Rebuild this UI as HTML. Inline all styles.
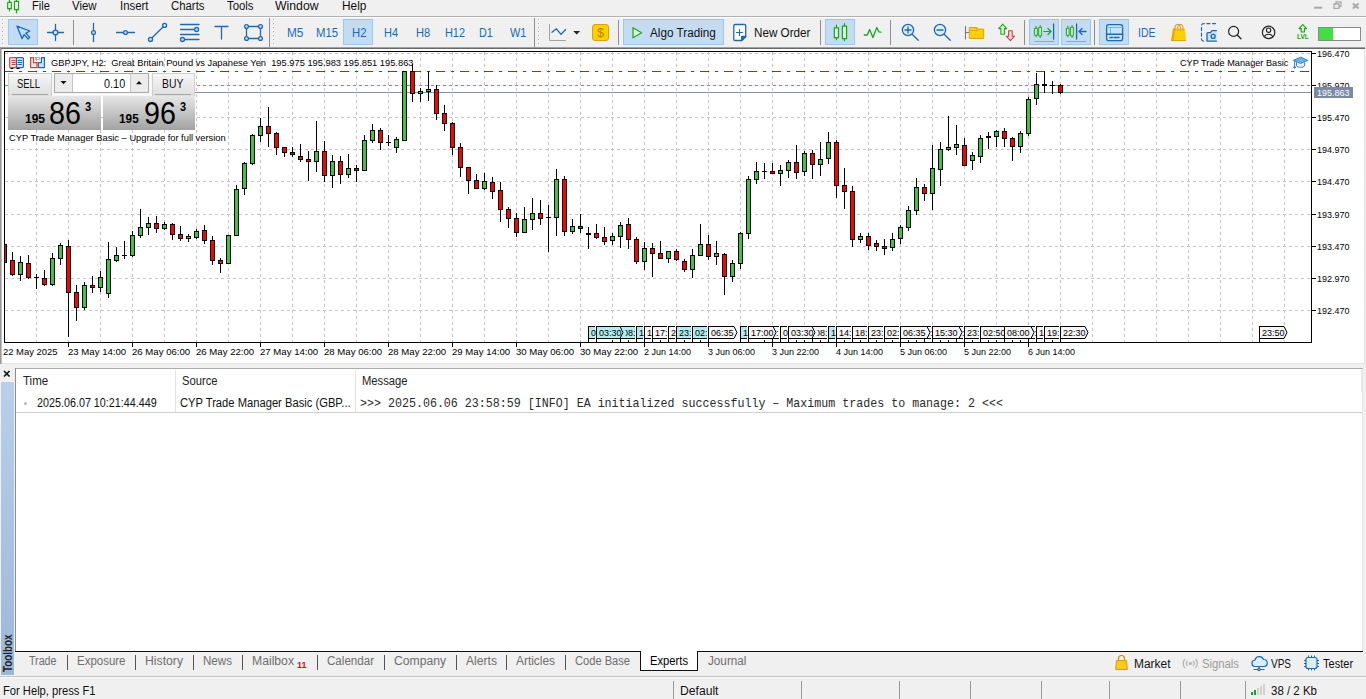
<!DOCTYPE html>
<html><head><meta charset="utf-8"><title>GBPJPY,H2</title>
<style>
html,body{margin:0;padding:0;}
body{width:1366px;height:699px;overflow:hidden;background:#f0f0f0;position:relative;font-family:"Liberation Sans",sans-serif;}
.t{position:absolute;white-space:pre;}
.b{position:absolute;}
svg{position:absolute;left:0;top:0;overflow:visible;}
</style></head><body>

<div class="b" style="left:0px;top:16px;width:1366px;height:1px;background:#b2b2b2;"></div>
<div class="b" style="left:0px;top:17px;width:1366px;height:1px;background:#ffffff;"></div>
<span id="m0" class="t" style="left:32.40px;top:-2.16px;font:normal 12px/16px 'Liberation Sans', sans-serif;color:#111;transform:scaleX(0.9202);transform-origin:0 0;">File</span>
<span id="m1" class="t" style="left:72.10px;top:-2.16px;font:normal 12px/16px 'Liberation Sans', sans-serif;color:#111;transform:scaleX(0.9536);transform-origin:0 0;">View</span>
<span id="m2" class="t" style="left:119.50px;top:-2.16px;font:normal 12px/16px 'Liberation Sans', sans-serif;color:#111;transform:scaleX(0.9495);transform-origin:0 0;">Insert</span>
<span id="m3" class="t" style="left:170.50px;top:-2.16px;font:normal 12px/16px 'Liberation Sans', sans-serif;color:#111;transform:scaleX(0.9478);transform-origin:0 0;">Charts</span>
<span id="m4" class="t" style="left:226.50px;top:-2.16px;font:normal 12px/16px 'Liberation Sans', sans-serif;color:#111;transform:scaleX(0.9459);transform-origin:0 0;">Tools</span>
<span id="m5" class="t" style="left:275.40px;top:-2.16px;font:normal 12px/16px 'Liberation Sans', sans-serif;color:#111;transform:scaleX(1.0214);transform-origin:0 0;">Window</span>
<span id="m6" class="t" style="left:341.60px;top:-2.16px;font:normal 12px/16px 'Liberation Sans', sans-serif;color:#111;transform:scaleX(0.9884);transform-origin:0 0;">Help</span>
<div class="b" style="left:2px;top:19px;width:1px;height:1px;background:#b0b0b0;"></div>
<div class="b" style="left:3px;top:20px;width:1px;height:1px;background:#fff;"></div>
<div class="b" style="left:2px;top:23px;width:1px;height:1px;background:#b0b0b0;"></div>
<div class="b" style="left:3px;top:24px;width:1px;height:1px;background:#fff;"></div>
<div class="b" style="left:2px;top:27px;width:1px;height:1px;background:#b0b0b0;"></div>
<div class="b" style="left:3px;top:28px;width:1px;height:1px;background:#fff;"></div>
<div class="b" style="left:2px;top:31px;width:1px;height:1px;background:#b0b0b0;"></div>
<div class="b" style="left:3px;top:32px;width:1px;height:1px;background:#fff;"></div>
<div class="b" style="left:2px;top:35px;width:1px;height:1px;background:#b0b0b0;"></div>
<div class="b" style="left:3px;top:36px;width:1px;height:1px;background:#fff;"></div>
<div class="b" style="left:2px;top:39px;width:1px;height:1px;background:#b0b0b0;"></div>
<div class="b" style="left:3px;top:40px;width:1px;height:1px;background:#fff;"></div>
<div class="b" style="left:2px;top:43px;width:1px;height:1px;background:#b0b0b0;"></div>
<div class="b" style="left:3px;top:44px;width:1px;height:1px;background:#fff;"></div>
<div class="b" style="left:273px;top:19px;width:1px;height:1px;background:#b0b0b0;"></div>
<div class="b" style="left:274px;top:20px;width:1px;height:1px;background:#fff;"></div>
<div class="b" style="left:273px;top:23px;width:1px;height:1px;background:#b0b0b0;"></div>
<div class="b" style="left:274px;top:24px;width:1px;height:1px;background:#fff;"></div>
<div class="b" style="left:273px;top:27px;width:1px;height:1px;background:#b0b0b0;"></div>
<div class="b" style="left:274px;top:28px;width:1px;height:1px;background:#fff;"></div>
<div class="b" style="left:273px;top:31px;width:1px;height:1px;background:#b0b0b0;"></div>
<div class="b" style="left:274px;top:32px;width:1px;height:1px;background:#fff;"></div>
<div class="b" style="left:273px;top:35px;width:1px;height:1px;background:#b0b0b0;"></div>
<div class="b" style="left:274px;top:36px;width:1px;height:1px;background:#fff;"></div>
<div class="b" style="left:273px;top:39px;width:1px;height:1px;background:#b0b0b0;"></div>
<div class="b" style="left:274px;top:40px;width:1px;height:1px;background:#fff;"></div>
<div class="b" style="left:273px;top:43px;width:1px;height:1px;background:#b0b0b0;"></div>
<div class="b" style="left:274px;top:44px;width:1px;height:1px;background:#fff;"></div>
<div class="b" style="left:538px;top:19px;width:1px;height:1px;background:#b0b0b0;"></div>
<div class="b" style="left:539px;top:20px;width:1px;height:1px;background:#fff;"></div>
<div class="b" style="left:538px;top:23px;width:1px;height:1px;background:#b0b0b0;"></div>
<div class="b" style="left:539px;top:24px;width:1px;height:1px;background:#fff;"></div>
<div class="b" style="left:538px;top:27px;width:1px;height:1px;background:#b0b0b0;"></div>
<div class="b" style="left:539px;top:28px;width:1px;height:1px;background:#fff;"></div>
<div class="b" style="left:538px;top:31px;width:1px;height:1px;background:#b0b0b0;"></div>
<div class="b" style="left:539px;top:32px;width:1px;height:1px;background:#fff;"></div>
<div class="b" style="left:538px;top:35px;width:1px;height:1px;background:#b0b0b0;"></div>
<div class="b" style="left:539px;top:36px;width:1px;height:1px;background:#fff;"></div>
<div class="b" style="left:538px;top:39px;width:1px;height:1px;background:#b0b0b0;"></div>
<div class="b" style="left:539px;top:40px;width:1px;height:1px;background:#fff;"></div>
<div class="b" style="left:538px;top:43px;width:1px;height:1px;background:#b0b0b0;"></div>
<div class="b" style="left:539px;top:44px;width:1px;height:1px;background:#fff;"></div>
<div class="b" style="left:8px;top:19px;width:28px;height:24px;background:#c3dcf2;border:1px solid #98caf3;"></div>
<div class="b" style="left:73px;top:20px;width:1px;height:25px;background:#8e8e8e;"></div>
<div class="b" style="left:269px;top:18px;width:1px;height:29px;background:#8e8e8e;"></div>
<div class="b" style="left:534px;top:18px;width:1px;height:29px;background:#8e8e8e;"></div>
<div class="b" style="left:343px;top:19px;width:28px;height:24px;background:#c3dcf2;border:1px solid #98caf3;"></div>
<span id="tf0" class="t" style="left:286.60px;top:24.67px;font:normal 12.5px/16px 'Liberation Sans', sans-serif;color:#1b6ab3;transform:scaleX(0.9439);transform-origin:0 0;">M5</span>
<span id="tf1" class="t" style="left:315.70px;top:24.67px;font:normal 12.5px/16px 'Liberation Sans', sans-serif;color:#1b6ab3;transform:scaleX(0.9125);transform-origin:0 0;">M15</span>
<span id="tf2" class="t" style="left:351.60px;top:24.67px;font:normal 12.5px/16px 'Liberation Sans', sans-serif;color:#1b6ab3;transform:scaleX(0.9009);transform-origin:0 0;">H2</span>
<span id="tf3" class="t" style="left:383.60px;top:24.67px;font:normal 12.5px/16px 'Liberation Sans', sans-serif;color:#1b6ab3;transform:scaleX(0.8821);transform-origin:0 0;">H4</span>
<span id="tf4" class="t" style="left:415.80px;top:24.67px;font:normal 12.5px/16px 'Liberation Sans', sans-serif;color:#1b6ab3;transform:scaleX(0.8884);transform-origin:0 0;">H8</span>
<span id="tf5" class="t" style="left:444.50px;top:24.67px;font:normal 12.5px/16px 'Liberation Sans', sans-serif;color:#1b6ab3;transform:scaleX(0.8719);transform-origin:0 0;">H12</span>
<span id="tf6" class="t" style="left:479.30px;top:24.67px;font:normal 12.5px/16px 'Liberation Sans', sans-serif;color:#1b6ab3;transform:scaleX(0.8571);transform-origin:0 0;">D1</span>
<span id="tf7" class="t" style="left:509.60px;top:24.67px;font:normal 12.5px/16px 'Liberation Sans', sans-serif;color:#1b6ab3;transform:scaleX(0.8747);transform-origin:0 0;">W1</span>
<div class="b" style="left:618px;top:20px;width:1px;height:25px;background:#8e8e8e;"></div>
<div class="b" style="left:623px;top:19px;width:99px;height:24px;background:#c3dcf2;border:1px solid #98caf3;"></div>
<span id="algo" class="t" style="left:650.40px;top:24.67px;font:normal 12.5px/16px 'Liberation Sans', sans-serif;color:#111;transform:scaleX(0.9389);transform-origin:0 0;">Algo Trading</span>
<span id="nord" class="t" style="left:753.60px;top:24.67px;font:normal 12.5px/16px 'Liberation Sans', sans-serif;color:#111;transform:scaleX(0.9332);transform-origin:0 0;">New Order</span>
<div class="b" style="left:820px;top:20px;width:1px;height:25px;background:#8e8e8e;"></div>
<div class="b" style="left:825px;top:19px;width:28px;height:24px;background:#c3dcf2;border:1px solid #98caf3;"></div>
<div class="b" style="left:890px;top:20px;width:1px;height:25px;background:#8e8e8e;"></div>
<div class="b" style="left:1024px;top:20px;width:1px;height:25px;background:#8e8e8e;"></div>
<div class="b" style="left:1029px;top:19px;width:28px;height:24px;background:#c3dcf2;border:1px solid #98caf3;"></div>
<div class="b" style="left:1061px;top:19px;width:28px;height:24px;background:#c3dcf2;border:1px solid #98caf3;"></div>
<div class="b" style="left:1094px;top:20px;width:1px;height:25px;background:#8e8e8e;"></div>
<div class="b" style="left:1099px;top:19px;width:28px;height:24px;background:#c3dcf2;border:1px solid #98caf3;"></div>
<span id="ide" class="t" style="left:1137.60px;top:24.67px;font:normal 12.5px/16px 'Liberation Sans', sans-serif;color:#1b6ab3;transform:scaleX(0.8348);transform-origin:0 0;">IDE</span>
<div class="b" style="left:1318px;top:27px;width:41px;height:12px;background:#fff;border:1px solid #8a8a8a;"></div>
<div class="b" style="left:1319px;top:28px;width:14px;height:12px;background:#40e040;"></div>
<svg width="1366" height="50"><g stroke="#a8a8a8" fill="none" stroke-width="2"><path d="M1314 7.700h8.200"/><path d="M1334 4h5v4.300h-5z M1336 3.500v-1.700h5v4.500h-1.800" stroke-width="1.300"/><path d="M1352.800 3.600l5.800 5M1358.600 3.600l-5.800 5"/></g></svg>
<svg id="tbicons" width="1366" height="50">
<g fill="none" stroke="#1b6ab3" stroke-width="1.3" stroke-linecap="round" stroke-linejoin="round">
<g stroke="#1aa51a" stroke-width="1.2" fill="#f0fff0"><path d="M9.5 0v10.800M16.500 0v12.800" /><rect x="7.700" y="2.400" width="3.600" height="6.300"/><rect x="14.500" y="1.300" width="4" height="8.400"/></g>
<path d="M17 26.2 L29.8 31 L25.8 33.4 L29.8 37.4 L28.1 39 L24.1 34.6 L22 38.6 Z" fill="#b9e1ff"/>
<path d="M47.5 32.5h16M55.5 24.5v16"/><circle cx="55.5" cy="32.5" r="2.4" fill="#c6e6ff"/>
<path d="M93.5 23.5v18"/><circle cx="93.5" cy="32.5" r="1.9" fill="#c6e6ff"/>
<path d="M116.5 32.5h18"/><circle cx="125.5" cy="32.5" r="1.9" fill="#c6e6ff"/>
<path d="M151.8 38 L163.3 26.8"/><circle cx="150.5" cy="39.4" r="2" fill="#c6e6ff"/><circle cx="164.6" cy="25.4" r="2" fill="#c6e6ff"/>
<path d="M180.5 24.5h18.5M180.5 34.5h18.5M180.5 29.5h14M184.5 39.5h14.5"/><circle cx="196.6" cy="29.5" r="2" fill="#c6e6ff"/><circle cx="182.5" cy="39.5" r="2" fill="#c6e6ff"/>
<path d="M215 26.5h13M221.5 26.5v12.5"/>
<rect x="246.5" y="26.5" width="14" height="12"/><circle cx="246.5" cy="26.5" r="1.9" fill="#c6e6ff"/><circle cx="260.5" cy="26.5" r="1.9" fill="#c6e6ff"/><circle cx="246.5" cy="38.5" r="1.9" fill="#c6e6ff"/><circle cx="260.5" cy="38.5" r="1.9" fill="#c6e6ff"/>
<path d="M549.5 24.5v16h16" stroke="#999" stroke-width="0.9"/><path d="M552 32.300L556.400 28.800L561 34.400L565.600 29.500"/>
<path d="M573.3 31h6.8l-3.4 3.6z" fill="#222" stroke="none"/>
<rect x="592.5" y="24.5" width="16" height="16" rx="2.5" fill="#ffd000" stroke="#e0a000" stroke-width="1"/>
<path d="M633 27.8v10l8.6-5z" stroke="#22a722" fill="#dff7df"/>
<path d="M735 24.5h9.5a1.2 1.2 0 0 1 1.2 1.2v10.8l-4 4h-6.7a1.2 1.2 0 0 1 -1.2-1.2v-13.6a1.2 1.2 0 0 1 1.2-1.2z" fill="#fff"/><path d="M741.7 40.5v-4h4z" fill="#1b6ab3"/><path d="M736.5 32.5h6M739.5 29.5v6" stroke-width="1.1"/>
<g stroke="#1aa51a" stroke-width="1.2" fill="#d8f8d8"><path d="M836.400 25.200v14.500M844.500 23.500v17.200"/><rect x="834.300" y="27.900" width="4.200" height="9.800"/><rect x="842.400" y="26.200" width="4.200" height="12.500"/></g>
<path d="M864.300 35H867.300L869.600 29.600L872.900 37.500L876.800 27.500L878.800 31.800L881 32.200" stroke="#1aa51a" stroke-width="1.3"/>
<circle cx="908" cy="30" r="5.600" fill="#d9edfd"/><path d="M912.200 34.200l6 6M905 30h6M908 27v6"/>
<circle cx="940" cy="30" r="5.600" fill="#d9edfd"/><path d="M944.200 34.200l6 6M937 30h6"/>
<path d="M965.500 26.500v12.500M965.500 32.500h4" stroke="#777" stroke-width="1.100"/><path d="M969.700 27.500h7.300v1.600h6.700v9.400h-14z" fill="#ffd000" stroke="#dba400" stroke-width="1"/><path d="M970 30.500h7v-1.400" stroke="#dba400" stroke-width="0.800"/>
<path d="M1002.700 24.200L1006.700 28.600H1004.500V34.200H1000.900V28.600H998.700Z" stroke="#1aa51a" fill="#dff9df" stroke-width="1.100"/><path d="M1010.400 40.600L1014.500 36.200H1012.200V30.800H1008.600V36.200H1006.300Z" stroke="#e03a3a" fill="#ffdede" stroke-width="1.100"/>
<g stroke="#1aa51a" stroke-width="1" fill="#d8f8d8"><path d="M1036.100 26.300v10.500M1040.200 25.500v12"/><rect x="1035" y="28.300" width="2.300" height="7"/><rect x="1039.100" y="27.300" width="2.300" height="8.700"/></g>
<path d="M1043.800 31.500h7M1048 28.500l3 3-3 3" stroke="#1aa51a" stroke-width="1.200"/><path d="M1053.600 24v15"/>
<path d="M1035 41.500h19" stroke="#98a4b4" stroke-width="1"/>
<g stroke="#1aa51a" stroke-width="1" fill="#d8f8d8"><path d="M1067.900 26.300v10.500M1072.100 25.500v12"/><rect x="1066.800" y="28.300" width="2.300" height="7"/><rect x="1071" y="27.300" width="2.300" height="8.700"/></g>
<path d="M1076.600 24v15"/><path d="M1079 31.500h7M1082 28.500l-3 3 3 3"/>
<path d="M1066.800 41.500h19" stroke="#98a4b4" stroke-width="1"/>
<rect x="1106.6" y="24.6" width="16" height="16" rx="2.2" fill="#c4e4ff"/><path d="M1107 27.5h15.5M1110.5 27.5v6.5" stroke="#6aa8dc" stroke-width="0.8"/><path d="M1106.6 34.2h16" stroke-width="1.5"/><path d="M1110 37.5h2.5M1114 37.5h5"/>
<path d="M1173 28.5h12l1 12.2h-14.8z" fill="#ffd000" stroke="none"/><path d="M1173 28.5l-1.800 12.2h2.600l1-12.2z" fill="#e8a800" stroke="none"/><path d="M1171.5 40.5h14.300" stroke="#d89c00" stroke-width="0.8"/><path d="M1175 30.500v-3.500a2.700 2.700 0 0 1 5.400 0v3.500M1177.700 30.500v-3.500a2.600 2.600 0 0 1 5.200 0v3.500" stroke="#d4941a" stroke-width="1"/>
<path d="M1215.500 23.600h-12a2 2 0 0 0 -2 2v13.500a2 2 0 0 0 2 2h1.500" stroke-dasharray="3 2.600" stroke-width="1.200"/><path d="M1216.500 30.600h-4.500l-1.500 2h-2.500a1 1 0 0 0 -1 1v7.500h9.500" fill="#c4e4ff"/><circle cx="1213.200" cy="36.400" r="2"/>
<circle cx="1233.600" cy="31.400" r="5" stroke="#222" stroke-width="1.200"/><path d="M1237.200 35l3.800 3.800" stroke="#222" stroke-width="1.300"/>
<circle cx="1268.600" cy="32.400" r="6.200" stroke="#222" stroke-width="1.200"/><circle cx="1268.600" cy="30.200" r="2.200" stroke="#222" stroke-width="1.100"/><path d="M1264.500 36.600c1.200-3.200 7-3.200 8.200 0" stroke="#222" stroke-width="1.100"/>
<path d="M1301.200 32v-3.400h-2.200l3.800-4 3.800 4h-2.200v3.400z" stroke="#14a014" stroke-width="1.100" fill="#e4fbe4"/>
</g></svg>
<span id="dollar" class="t" style="left:596.80px;top:23.92px;font:normal 13.5px/18px 'Liberation Sans', sans-serif;color:#bb8500;transform:scaleX(0.9580);transform-origin:0 0;">$</span>
<span id="lvl" class="t" style="left:1297.00px;top:32.23px;font:bold 8px/10px 'Liberation Sans', sans-serif;color:#14a014;transform:scaleX(0.8129);transform-origin:0 0;">LVL</span>
<div class="b" style="left:0px;top:47px;width:1365px;height:1px;background:#a0a0a0;"></div>
<div class="b" style="left:0px;top:48px;width:1365px;height:1px;background:#696969;"></div>
<div class="b" style="left:0px;top:47px;width:1px;height:317px;background:#989898;"></div>
<div class="b" style="left:1px;top:49px;width:1px;height:315px;background:#c0c0c0;"></div>
<div class="b" style="left:2px;top:49px;width:1362px;height:315px;background:#ffffff;"></div>
<div class="b" style="left:2px;top:363px;width:1362px;height:1px;background:#e4e4e4;"></div>
<div class="b" style="left:1364px;top:49px;width:1px;height:315px;background:#e4e4e4;"></div>
<svg id="chart" width="1366" height="370" shape-rendering="crispEdges">
<g stroke="#c4c4c4" stroke-width="1" stroke-dasharray="3 3" fill="none">
<path d="M5 53.5H1311"/>
<path d="M5 85.5H1311"/>
<path d="M5 117.5H1311"/>
<path d="M5 149.5H1311"/>
<path d="M5 181.5H1311"/>
<path d="M5 214.5H1311"/>
<path d="M5 246.5H1311"/>
<path d="M5 278.5H1311"/>
<path d="M5 310.5H1311"/>
<path d="M36.5 52V342"/>
<path d="M68.5 52V342"/>
<path d="M100.5 52V342"/>
<path d="M132.5 52V342"/>
<path d="M164.5 52V342"/>
<path d="M196.5 52V342"/>
<path d="M228.5 52V342"/>
<path d="M260.5 52V342"/>
<path d="M292.5 52V342"/>
<path d="M324.5 52V342"/>
<path d="M356.5 52V342"/>
<path d="M388.5 52V342"/>
<path d="M420.5 52V342"/>
<path d="M452.5 52V342"/>
<path d="M484.5 52V342"/>
<path d="M516.5 52V342"/>
<path d="M548.5 52V342"/>
<path d="M580.5 52V342"/>
<path d="M612.5 52V342"/>
<path d="M644.5 52V342"/>
<path d="M676.5 52V342"/>
<path d="M708.5 52V342"/>
<path d="M740.5 52V342"/>
<path d="M772.5 52V342"/>
<path d="M804.5 52V342"/>
<path d="M836.5 52V342"/>
<path d="M868.5 52V342"/>
<path d="M900.5 52V342"/>
<path d="M932.5 52V342"/>
<path d="M964.5 52V342"/>
<path d="M996.5 52V342"/>
<path d="M1028.5 52V342"/>
<path d="M1060.5 52V342"/>
<path d="M1092.5 52V342"/>
<path d="M1124.5 52V342"/>
<path d="M1156.5 52V342"/>
<path d="M1188.5 52V342"/>
<path d="M1220.5 52V342"/>
<path d="M1252.5 52V342"/>
<path d="M1284.5 52V342"/>
</g>
<path d="M195 92.500H1311" stroke="#8292a8" stroke-width="1"/>
<path d="M5 85.500H1311" stroke="#30d030" stroke-width="1" stroke-dasharray="3 3"/>
<path d="M4 71.500H1311" stroke="#ff0000" stroke-width="1" stroke-dasharray="9 6 3 6"/>
<rect x="4" y="244" width="1" height="19" fill="#000"/>
<rect x="2" y="244" width="5" height="19" fill="#000"/>
<rect x="3" y="245" width="3" height="17" fill="#ff0000"/>
<rect x="12" y="252" width="1" height="24" fill="#000"/>
<rect x="10" y="260" width="5" height="15" fill="#000"/>
<rect x="11" y="261" width="3" height="13" fill="#ff0000"/>
<rect x="20" y="256" width="1" height="25" fill="#000"/>
<rect x="18" y="262" width="5" height="13" fill="#000"/>
<rect x="19" y="263" width="3" height="11" fill="#32cd32"/>
<rect x="28" y="255" width="1" height="24" fill="#000"/>
<rect x="26" y="263" width="5" height="15" fill="#000"/>
<rect x="27" y="264" width="3" height="13" fill="#ff0000"/>
<rect x="36" y="274" width="1" height="15" fill="#000"/>
<rect x="34" y="277" width="5" height="1" fill="#000"/>
<rect x="44" y="270" width="1" height="16" fill="#000"/>
<rect x="42" y="278" width="5" height="7" fill="#000"/>
<rect x="43" y="279" width="3" height="5" fill="#ff0000"/>
<rect x="52" y="253" width="1" height="33" fill="#000"/>
<rect x="50" y="258" width="5" height="27" fill="#000"/>
<rect x="51" y="259" width="3" height="25" fill="#32cd32"/>
<rect x="60" y="243" width="1" height="22" fill="#000"/>
<rect x="58" y="245" width="5" height="14" fill="#000"/>
<rect x="59" y="246" width="3" height="12" fill="#32cd32"/>
<rect x="68" y="240" width="1" height="97" fill="#000"/>
<rect x="66" y="246" width="5" height="47" fill="#000"/>
<rect x="67" y="247" width="3" height="45" fill="#ff0000"/>
<rect x="76" y="285" width="1" height="36" fill="#000"/>
<rect x="74" y="292" width="5" height="16" fill="#000"/>
<rect x="75" y="293" width="3" height="14" fill="#ff0000"/>
<rect x="84" y="282" width="1" height="28" fill="#000"/>
<rect x="82" y="285" width="5" height="23" fill="#000"/>
<rect x="83" y="286" width="3" height="21" fill="#32cd32"/>
<rect x="92" y="276" width="1" height="17" fill="#000"/>
<rect x="90" y="285" width="5" height="3" fill="#000"/>
<rect x="91" y="286" width="3" height="1" fill="#ff0000"/>
<rect x="100" y="271" width="1" height="21" fill="#000"/>
<rect x="98" y="277" width="5" height="11" fill="#000"/>
<rect x="99" y="278" width="3" height="9" fill="#32cd32"/>
<rect x="108" y="242" width="1" height="56" fill="#000"/>
<rect x="106" y="259" width="5" height="35" fill="#000"/>
<rect x="107" y="260" width="3" height="33" fill="#32cd32"/>
<rect x="116" y="247" width="1" height="15" fill="#000"/>
<rect x="114" y="255" width="5" height="6" fill="#000"/>
<rect x="115" y="256" width="3" height="4" fill="#32cd32"/>
<rect x="124" y="241" width="1" height="18" fill="#000"/>
<rect x="122" y="255" width="5" height="1" fill="#000"/>
<rect x="132" y="231" width="1" height="26" fill="#000"/>
<rect x="130" y="235" width="5" height="21" fill="#000"/>
<rect x="131" y="236" width="3" height="19" fill="#32cd32"/>
<rect x="140" y="209" width="1" height="29" fill="#000"/>
<rect x="138" y="227" width="5" height="9" fill="#000"/>
<rect x="139" y="228" width="3" height="7" fill="#32cd32"/>
<rect x="148" y="217" width="1" height="18" fill="#000"/>
<rect x="146" y="223" width="5" height="5" fill="#000"/>
<rect x="147" y="224" width="3" height="3" fill="#32cd32"/>
<rect x="156" y="216" width="1" height="17" fill="#000"/>
<rect x="154" y="223" width="5" height="6" fill="#000"/>
<rect x="155" y="224" width="3" height="4" fill="#ff0000"/>
<rect x="164" y="222" width="1" height="8" fill="#000"/>
<rect x="162" y="224" width="5" height="5" fill="#000"/>
<rect x="163" y="225" width="3" height="3" fill="#32cd32"/>
<rect x="172" y="223" width="1" height="17" fill="#000"/>
<rect x="170" y="224" width="5" height="11" fill="#000"/>
<rect x="171" y="225" width="3" height="9" fill="#ff0000"/>
<rect x="180" y="226" width="1" height="15" fill="#000"/>
<rect x="178" y="234" width="5" height="5" fill="#000"/>
<rect x="179" y="235" width="3" height="3" fill="#ff0000"/>
<rect x="188" y="234" width="1" height="8" fill="#000"/>
<rect x="186" y="236" width="5" height="3" fill="#000"/>
<rect x="187" y="237" width="3" height="1" fill="#32cd32"/>
<rect x="196" y="229" width="1" height="10" fill="#000"/>
<rect x="194" y="231" width="5" height="7" fill="#000"/>
<rect x="195" y="232" width="3" height="5" fill="#32cd32"/>
<rect x="204" y="225" width="1" height="19" fill="#000"/>
<rect x="202" y="230" width="5" height="11" fill="#000"/>
<rect x="203" y="231" width="3" height="9" fill="#ff0000"/>
<rect x="212" y="236" width="1" height="29" fill="#000"/>
<rect x="210" y="240" width="5" height="21" fill="#000"/>
<rect x="211" y="241" width="3" height="19" fill="#ff0000"/>
<rect x="220" y="258" width="1" height="15" fill="#000"/>
<rect x="218" y="260" width="5" height="4" fill="#000"/>
<rect x="219" y="261" width="3" height="2" fill="#ff0000"/>
<rect x="228" y="235" width="1" height="29" fill="#000"/>
<rect x="226" y="235" width="5" height="29" fill="#000"/>
<rect x="227" y="236" width="3" height="27" fill="#32cd32"/>
<rect x="236" y="185" width="1" height="51" fill="#000"/>
<rect x="234" y="189" width="5" height="47" fill="#000"/>
<rect x="235" y="190" width="3" height="45" fill="#32cd32"/>
<rect x="244" y="162" width="1" height="33" fill="#000"/>
<rect x="242" y="163" width="5" height="26" fill="#000"/>
<rect x="243" y="164" width="3" height="24" fill="#32cd32"/>
<rect x="252" y="134" width="1" height="31" fill="#000"/>
<rect x="250" y="135" width="5" height="29" fill="#000"/>
<rect x="251" y="136" width="3" height="27" fill="#32cd32"/>
<rect x="260" y="118" width="1" height="24" fill="#000"/>
<rect x="258" y="126" width="5" height="10" fill="#000"/>
<rect x="259" y="127" width="3" height="8" fill="#32cd32"/>
<rect x="268" y="107" width="1" height="40" fill="#000"/>
<rect x="266" y="126" width="5" height="8" fill="#000"/>
<rect x="267" y="127" width="3" height="6" fill="#ff0000"/>
<rect x="276" y="132" width="1" height="23" fill="#000"/>
<rect x="274" y="133" width="5" height="15" fill="#000"/>
<rect x="275" y="134" width="3" height="13" fill="#ff0000"/>
<rect x="284" y="147" width="1" height="10" fill="#000"/>
<rect x="282" y="147" width="5" height="6" fill="#000"/>
<rect x="283" y="148" width="3" height="4" fill="#ff0000"/>
<rect x="292" y="147" width="1" height="10" fill="#000"/>
<rect x="290" y="152" width="5" height="3" fill="#000"/>
<rect x="291" y="153" width="3" height="1" fill="#ff0000"/>
<rect x="300" y="144" width="1" height="18" fill="#000"/>
<rect x="298" y="156" width="5" height="4" fill="#000"/>
<rect x="299" y="157" width="3" height="2" fill="#ff0000"/>
<rect x="308" y="151" width="1" height="30" fill="#000"/>
<rect x="306" y="159" width="5" height="3" fill="#000"/>
<rect x="307" y="160" width="3" height="1" fill="#ff0000"/>
<rect x="316" y="121" width="1" height="51" fill="#000"/>
<rect x="314" y="151" width="5" height="11" fill="#000"/>
<rect x="315" y="152" width="3" height="9" fill="#32cd32"/>
<rect x="324" y="141" width="1" height="41" fill="#000"/>
<rect x="322" y="151" width="5" height="25" fill="#000"/>
<rect x="323" y="152" width="3" height="23" fill="#ff0000"/>
<rect x="332" y="155" width="1" height="33" fill="#000"/>
<rect x="330" y="161" width="5" height="15" fill="#000"/>
<rect x="331" y="162" width="3" height="13" fill="#32cd32"/>
<rect x="340" y="156" width="1" height="28" fill="#000"/>
<rect x="338" y="161" width="5" height="14" fill="#000"/>
<rect x="339" y="162" width="3" height="12" fill="#ff0000"/>
<rect x="348" y="154" width="1" height="24" fill="#000"/>
<rect x="346" y="168" width="5" height="7" fill="#000"/>
<rect x="347" y="169" width="3" height="5" fill="#32cd32"/>
<rect x="356" y="165" width="1" height="17" fill="#000"/>
<rect x="354" y="168" width="5" height="3" fill="#000"/>
<rect x="355" y="169" width="3" height="1" fill="#ff0000"/>
<rect x="364" y="135" width="1" height="36" fill="#000"/>
<rect x="362" y="140" width="5" height="31" fill="#000"/>
<rect x="363" y="141" width="3" height="29" fill="#32cd32"/>
<rect x="372" y="124" width="1" height="19" fill="#000"/>
<rect x="370" y="130" width="5" height="11" fill="#000"/>
<rect x="371" y="131" width="3" height="9" fill="#32cd32"/>
<rect x="380" y="128" width="1" height="22" fill="#000"/>
<rect x="378" y="130" width="5" height="13" fill="#000"/>
<rect x="379" y="131" width="3" height="11" fill="#ff0000"/>
<rect x="388" y="135" width="1" height="11" fill="#000"/>
<rect x="386" y="142" width="5" height="1" fill="#000"/>
<rect x="396" y="137" width="1" height="16" fill="#000"/>
<rect x="394" y="139" width="5" height="9" fill="#000"/>
<rect x="395" y="140" width="3" height="7" fill="#32cd32"/>
<rect x="404" y="71" width="1" height="70" fill="#000"/>
<rect x="402" y="71" width="5" height="70" fill="#000"/>
<rect x="403" y="72" width="3" height="68" fill="#32cd32"/>
<rect x="412" y="64" width="1" height="38" fill="#000"/>
<rect x="410" y="71" width="5" height="23" fill="#000"/>
<rect x="411" y="72" width="3" height="21" fill="#ff0000"/>
<rect x="420" y="88" width="1" height="14" fill="#000"/>
<rect x="418" y="91" width="5" height="3" fill="#000"/>
<rect x="419" y="92" width="3" height="1" fill="#32cd32"/>
<rect x="428" y="71" width="1" height="30" fill="#000"/>
<rect x="426" y="89" width="5" height="3" fill="#000"/>
<rect x="427" y="90" width="3" height="1" fill="#32cd32"/>
<rect x="436" y="85" width="1" height="35" fill="#000"/>
<rect x="434" y="89" width="5" height="25" fill="#000"/>
<rect x="435" y="90" width="3" height="23" fill="#ff0000"/>
<rect x="444" y="105" width="1" height="26" fill="#000"/>
<rect x="442" y="113" width="5" height="11" fill="#000"/>
<rect x="443" y="114" width="3" height="9" fill="#ff0000"/>
<rect x="452" y="122" width="1" height="33" fill="#000"/>
<rect x="450" y="123" width="5" height="25" fill="#000"/>
<rect x="451" y="124" width="3" height="23" fill="#ff0000"/>
<rect x="460" y="143" width="1" height="34" fill="#000"/>
<rect x="458" y="147" width="5" height="21" fill="#000"/>
<rect x="459" y="148" width="3" height="19" fill="#ff0000"/>
<rect x="468" y="167" width="1" height="27" fill="#000"/>
<rect x="466" y="167" width="5" height="14" fill="#000"/>
<rect x="467" y="168" width="3" height="12" fill="#ff0000"/>
<rect x="476" y="174" width="1" height="15" fill="#000"/>
<rect x="474" y="180" width="5" height="9" fill="#000"/>
<rect x="475" y="181" width="3" height="7" fill="#ff0000"/>
<rect x="484" y="173" width="1" height="17" fill="#000"/>
<rect x="482" y="181" width="5" height="8" fill="#000"/>
<rect x="483" y="182" width="3" height="6" fill="#32cd32"/>
<rect x="492" y="177" width="1" height="22" fill="#000"/>
<rect x="490" y="182" width="5" height="10" fill="#000"/>
<rect x="491" y="183" width="3" height="8" fill="#ff0000"/>
<rect x="500" y="182" width="1" height="40" fill="#000"/>
<rect x="498" y="190" width="5" height="20" fill="#000"/>
<rect x="499" y="191" width="3" height="18" fill="#ff0000"/>
<rect x="508" y="207" width="1" height="21" fill="#000"/>
<rect x="506" y="209" width="5" height="10" fill="#000"/>
<rect x="507" y="210" width="3" height="8" fill="#ff0000"/>
<rect x="516" y="213" width="1" height="24" fill="#000"/>
<rect x="514" y="218" width="5" height="15" fill="#000"/>
<rect x="515" y="219" width="3" height="13" fill="#ff0000"/>
<rect x="524" y="207" width="1" height="26" fill="#000"/>
<rect x="522" y="219" width="5" height="14" fill="#000"/>
<rect x="523" y="220" width="3" height="12" fill="#32cd32"/>
<rect x="532" y="198" width="1" height="32" fill="#000"/>
<rect x="530" y="213" width="5" height="7" fill="#000"/>
<rect x="531" y="214" width="3" height="5" fill="#32cd32"/>
<rect x="540" y="200" width="1" height="25" fill="#000"/>
<rect x="538" y="213" width="5" height="6" fill="#000"/>
<rect x="539" y="214" width="3" height="4" fill="#ff0000"/>
<rect x="548" y="205" width="1" height="47" fill="#000"/>
<rect x="546" y="217" width="5" height="1" fill="#000"/>
<rect x="556" y="169" width="1" height="67" fill="#000"/>
<rect x="554" y="179" width="5" height="39" fill="#000"/>
<rect x="555" y="180" width="3" height="37" fill="#32cd32"/>
<rect x="564" y="176" width="1" height="60" fill="#000"/>
<rect x="562" y="179" width="5" height="53" fill="#000"/>
<rect x="563" y="180" width="3" height="51" fill="#ff0000"/>
<rect x="572" y="219" width="1" height="15" fill="#000"/>
<rect x="570" y="226" width="5" height="6" fill="#000"/>
<rect x="571" y="227" width="3" height="4" fill="#32cd32"/>
<rect x="580" y="214" width="1" height="19" fill="#000"/>
<rect x="578" y="226" width="5" height="3" fill="#000"/>
<rect x="579" y="227" width="3" height="1" fill="#ff0000"/>
<rect x="588" y="227" width="1" height="22" fill="#000"/>
<rect x="586" y="233" width="5" height="2" fill="#000"/>
<rect x="596" y="224" width="1" height="15" fill="#000"/>
<rect x="594" y="233" width="5" height="5" fill="#000"/>
<rect x="595" y="234" width="3" height="3" fill="#ff0000"/>
<rect x="604" y="227" width="1" height="18" fill="#000"/>
<rect x="602" y="237" width="5" height="5" fill="#000"/>
<rect x="603" y="238" width="3" height="3" fill="#ff0000"/>
<rect x="612" y="233" width="1" height="12" fill="#000"/>
<rect x="610" y="236" width="5" height="5" fill="#000"/>
<rect x="611" y="237" width="3" height="3" fill="#32cd32"/>
<rect x="620" y="222" width="1" height="26" fill="#000"/>
<rect x="618" y="225" width="5" height="12" fill="#000"/>
<rect x="619" y="226" width="3" height="10" fill="#32cd32"/>
<rect x="628" y="218" width="1" height="31" fill="#000"/>
<rect x="626" y="224" width="5" height="16" fill="#000"/>
<rect x="627" y="225" width="3" height="14" fill="#ff0000"/>
<rect x="636" y="237" width="1" height="27" fill="#000"/>
<rect x="634" y="239" width="5" height="23" fill="#000"/>
<rect x="635" y="240" width="3" height="21" fill="#ff0000"/>
<rect x="644" y="242" width="1" height="28" fill="#000"/>
<rect x="642" y="248" width="5" height="14" fill="#000"/>
<rect x="643" y="249" width="3" height="12" fill="#32cd32"/>
<rect x="652" y="243" width="1" height="34" fill="#000"/>
<rect x="650" y="248" width="5" height="6" fill="#000"/>
<rect x="651" y="249" width="3" height="4" fill="#ff0000"/>
<rect x="660" y="241" width="1" height="18" fill="#000"/>
<rect x="658" y="253" width="5" height="6" fill="#000"/>
<rect x="659" y="254" width="3" height="4" fill="#ff0000"/>
<rect x="668" y="251" width="1" height="12" fill="#000"/>
<rect x="666" y="251" width="5" height="8" fill="#000"/>
<rect x="667" y="252" width="3" height="6" fill="#32cd32"/>
<rect x="676" y="249" width="1" height="12" fill="#000"/>
<rect x="674" y="251" width="5" height="9" fill="#000"/>
<rect x="675" y="252" width="3" height="7" fill="#ff0000"/>
<rect x="684" y="259" width="1" height="13" fill="#000"/>
<rect x="682" y="261" width="5" height="9" fill="#000"/>
<rect x="683" y="262" width="3" height="7" fill="#ff0000"/>
<rect x="692" y="249" width="1" height="29" fill="#000"/>
<rect x="690" y="255" width="5" height="15" fill="#000"/>
<rect x="691" y="256" width="3" height="13" fill="#32cd32"/>
<rect x="700" y="224" width="1" height="32" fill="#000"/>
<rect x="698" y="244" width="5" height="12" fill="#000"/>
<rect x="699" y="245" width="3" height="10" fill="#32cd32"/>
<rect x="708" y="235" width="1" height="25" fill="#000"/>
<rect x="706" y="244" width="5" height="13" fill="#000"/>
<rect x="707" y="245" width="3" height="11" fill="#ff0000"/>
<rect x="716" y="241" width="1" height="24" fill="#000"/>
<rect x="714" y="253" width="5" height="4" fill="#000"/>
<rect x="715" y="254" width="3" height="2" fill="#32cd32"/>
<rect x="724" y="253" width="1" height="42" fill="#000"/>
<rect x="722" y="254" width="5" height="23" fill="#000"/>
<rect x="723" y="255" width="3" height="21" fill="#ff0000"/>
<rect x="732" y="260" width="1" height="22" fill="#000"/>
<rect x="730" y="263" width="5" height="14" fill="#000"/>
<rect x="731" y="264" width="3" height="12" fill="#32cd32"/>
<rect x="740" y="232" width="1" height="37" fill="#000"/>
<rect x="738" y="233" width="5" height="31" fill="#000"/>
<rect x="739" y="234" width="3" height="29" fill="#32cd32"/>
<rect x="748" y="176" width="1" height="63" fill="#000"/>
<rect x="746" y="179" width="5" height="55" fill="#000"/>
<rect x="747" y="180" width="3" height="53" fill="#32cd32"/>
<rect x="756" y="162" width="1" height="22" fill="#000"/>
<rect x="754" y="171" width="5" height="9" fill="#000"/>
<rect x="755" y="172" width="3" height="7" fill="#32cd32"/>
<rect x="764" y="163" width="1" height="16" fill="#000"/>
<rect x="762" y="171" width="5" height="1" fill="#000"/>
<rect x="772" y="163" width="1" height="11" fill="#000"/>
<rect x="770" y="171" width="5" height="3" fill="#000"/>
<rect x="771" y="172" width="3" height="1" fill="#ff0000"/>
<rect x="780" y="165" width="1" height="21" fill="#000"/>
<rect x="778" y="170" width="5" height="4" fill="#000"/>
<rect x="779" y="171" width="3" height="2" fill="#32cd32"/>
<rect x="788" y="160" width="1" height="18" fill="#000"/>
<rect x="786" y="162" width="5" height="9" fill="#000"/>
<rect x="787" y="163" width="3" height="7" fill="#32cd32"/>
<rect x="796" y="145" width="1" height="34" fill="#000"/>
<rect x="794" y="162" width="5" height="11" fill="#000"/>
<rect x="795" y="163" width="3" height="9" fill="#ff0000"/>
<rect x="804" y="151" width="1" height="25" fill="#000"/>
<rect x="802" y="153" width="5" height="19" fill="#000"/>
<rect x="803" y="154" width="3" height="17" fill="#32cd32"/>
<rect x="812" y="150" width="1" height="29" fill="#000"/>
<rect x="810" y="153" width="5" height="12" fill="#000"/>
<rect x="811" y="154" width="3" height="10" fill="#ff0000"/>
<rect x="820" y="142" width="1" height="34" fill="#000"/>
<rect x="818" y="159" width="5" height="6" fill="#000"/>
<rect x="819" y="160" width="3" height="4" fill="#32cd32"/>
<rect x="828" y="132" width="1" height="32" fill="#000"/>
<rect x="826" y="142" width="5" height="17" fill="#000"/>
<rect x="827" y="143" width="3" height="15" fill="#32cd32"/>
<rect x="836" y="140" width="1" height="58" fill="#000"/>
<rect x="834" y="142" width="5" height="44" fill="#000"/>
<rect x="835" y="143" width="3" height="42" fill="#ff0000"/>
<rect x="844" y="168" width="1" height="41" fill="#000"/>
<rect x="842" y="185" width="5" height="7" fill="#000"/>
<rect x="843" y="186" width="3" height="5" fill="#ff0000"/>
<rect x="852" y="186" width="1" height="61" fill="#000"/>
<rect x="850" y="191" width="5" height="49" fill="#000"/>
<rect x="851" y="192" width="3" height="47" fill="#ff0000"/>
<rect x="860" y="233" width="1" height="10" fill="#000"/>
<rect x="858" y="236" width="5" height="4" fill="#000"/>
<rect x="859" y="237" width="3" height="2" fill="#32cd32"/>
<rect x="868" y="233" width="1" height="17" fill="#000"/>
<rect x="866" y="236" width="5" height="10" fill="#000"/>
<rect x="867" y="237" width="3" height="8" fill="#ff0000"/>
<rect x="876" y="240" width="1" height="11" fill="#000"/>
<rect x="874" y="243" width="5" height="4" fill="#000"/>
<rect x="875" y="244" width="3" height="2" fill="#ff0000"/>
<rect x="884" y="239" width="1" height="16" fill="#000"/>
<rect x="882" y="246" width="5" height="3" fill="#000"/>
<rect x="883" y="247" width="3" height="1" fill="#ff0000"/>
<rect x="892" y="233" width="1" height="18" fill="#000"/>
<rect x="890" y="239" width="5" height="9" fill="#000"/>
<rect x="891" y="240" width="3" height="7" fill="#32cd32"/>
<rect x="900" y="225" width="1" height="19" fill="#000"/>
<rect x="898" y="227" width="5" height="12" fill="#000"/>
<rect x="899" y="228" width="3" height="10" fill="#32cd32"/>
<rect x="908" y="206" width="1" height="25" fill="#000"/>
<rect x="906" y="210" width="5" height="18" fill="#000"/>
<rect x="907" y="211" width="3" height="16" fill="#32cd32"/>
<rect x="916" y="178" width="1" height="37" fill="#000"/>
<rect x="914" y="187" width="5" height="24" fill="#000"/>
<rect x="915" y="188" width="3" height="22" fill="#32cd32"/>
<rect x="924" y="184" width="1" height="17" fill="#000"/>
<rect x="922" y="187" width="5" height="7" fill="#000"/>
<rect x="923" y="188" width="3" height="5" fill="#ff0000"/>
<rect x="932" y="145" width="1" height="65" fill="#000"/>
<rect x="930" y="168" width="5" height="26" fill="#000"/>
<rect x="931" y="169" width="3" height="24" fill="#32cd32"/>
<rect x="940" y="142" width="1" height="44" fill="#000"/>
<rect x="938" y="149" width="5" height="21" fill="#000"/>
<rect x="939" y="150" width="3" height="19" fill="#32cd32"/>
<rect x="948" y="116" width="1" height="35" fill="#000"/>
<rect x="946" y="147" width="5" height="3" fill="#000"/>
<rect x="947" y="148" width="3" height="1" fill="#32cd32"/>
<rect x="956" y="125" width="1" height="30" fill="#000"/>
<rect x="954" y="144" width="5" height="4" fill="#000"/>
<rect x="955" y="145" width="3" height="2" fill="#32cd32"/>
<rect x="964" y="138" width="1" height="28" fill="#000"/>
<rect x="962" y="145" width="5" height="21" fill="#000"/>
<rect x="963" y="146" width="3" height="19" fill="#ff0000"/>
<rect x="972" y="152" width="1" height="18" fill="#000"/>
<rect x="970" y="155" width="5" height="6" fill="#000"/>
<rect x="971" y="156" width="3" height="4" fill="#32cd32"/>
<rect x="980" y="135" width="1" height="28" fill="#000"/>
<rect x="978" y="138" width="5" height="19" fill="#000"/>
<rect x="979" y="139" width="3" height="17" fill="#32cd32"/>
<rect x="988" y="132" width="1" height="17" fill="#000"/>
<rect x="986" y="136" width="5" height="2" fill="#000"/>
<rect x="996" y="130" width="1" height="17" fill="#000"/>
<rect x="994" y="131" width="5" height="6" fill="#000"/>
<rect x="995" y="132" width="3" height="4" fill="#32cd32"/>
<rect x="1004" y="128" width="1" height="19" fill="#000"/>
<rect x="1002" y="131" width="5" height="8" fill="#000"/>
<rect x="1003" y="132" width="3" height="6" fill="#ff0000"/>
<rect x="1012" y="137" width="1" height="24" fill="#000"/>
<rect x="1010" y="138" width="5" height="9" fill="#000"/>
<rect x="1011" y="139" width="3" height="7" fill="#ff0000"/>
<rect x="1020" y="131" width="1" height="22" fill="#000"/>
<rect x="1018" y="133" width="5" height="14" fill="#000"/>
<rect x="1019" y="134" width="3" height="12" fill="#32cd32"/>
<rect x="1028" y="97" width="1" height="39" fill="#000"/>
<rect x="1026" y="99" width="5" height="35" fill="#000"/>
<rect x="1027" y="100" width="3" height="33" fill="#32cd32"/>
<rect x="1036" y="73" width="1" height="32" fill="#000"/>
<rect x="1034" y="84" width="5" height="15" fill="#000"/>
<rect x="1035" y="85" width="3" height="13" fill="#32cd32"/>
<rect x="1044" y="71" width="1" height="22" fill="#000"/>
<rect x="1042" y="84" width="5" height="2" fill="#000"/>
<rect x="1052" y="81" width="1" height="13" fill="#000"/>
<rect x="1050" y="85" width="5" height="1" fill="#000"/>
<rect x="1060" y="84" width="1" height="10" fill="#000"/>
<rect x="1058" y="85" width="5" height="8" fill="#000"/>
<rect x="1059" y="86" width="3" height="6" fill="#ff0000"/>
<rect x="4.5" y="51.5" width="1307" height="291" fill="none" stroke="#000"/>
<rect x="2" y="52" width="2" height="300" fill="#fff"/>
<rect x="1312" y="53" width="4" height="1" fill="#000"/>
<rect x="1312" y="85" width="4" height="1" fill="#000"/>
<rect x="1312" y="117" width="4" height="1" fill="#000"/>
<rect x="1312" y="149" width="4" height="1" fill="#000"/>
<rect x="1312" y="181" width="4" height="1" fill="#000"/>
<rect x="1312" y="214" width="4" height="1" fill="#000"/>
<rect x="1312" y="246" width="4" height="1" fill="#000"/>
<rect x="1312" y="278" width="4" height="1" fill="#000"/>
<rect x="1312" y="310" width="4" height="1" fill="#000"/>
<rect x="68" y="342" width="1" height="5" fill="#000"/>
<rect x="132" y="342" width="1" height="5" fill="#000"/>
<rect x="196" y="342" width="1" height="5" fill="#000"/>
<rect x="260" y="342" width="1" height="5" fill="#000"/>
<rect x="324" y="342" width="1" height="5" fill="#000"/>
<rect x="388" y="342" width="1" height="5" fill="#000"/>
<rect x="452" y="342" width="1" height="5" fill="#000"/>
<rect x="516" y="342" width="1" height="5" fill="#000"/>
<rect x="580" y="342" width="1" height="5" fill="#000"/>
<rect x="644" y="342" width="1" height="5" fill="#000"/>
<rect x="708" y="342" width="1" height="5" fill="#000"/>
<rect x="772" y="342" width="1" height="5" fill="#000"/>
<rect x="836" y="342" width="1" height="5" fill="#000"/>
<rect x="900" y="342" width="1" height="5" fill="#000"/>
<rect x="964" y="342" width="1" height="5" fill="#000"/>
<rect x="1028" y="342" width="1" height="5" fill="#000"/>
</svg>
<span id="p0" class="t" style="left:1316.90px;top:47.71px;font:normal 9.5px/12px 'Liberation Sans', sans-serif;color:#000;transform:scaleX(0.9434);transform-origin:0 0;">196.470</span>
<span id="p1" class="t" style="left:1316.90px;top:79.71px;font:normal 9.5px/12px 'Liberation Sans', sans-serif;color:#000;transform:scaleX(0.9434);transform-origin:0 0;">195.970</span>
<span id="p2" class="t" style="left:1316.90px;top:111.71px;font:normal 9.5px/12px 'Liberation Sans', sans-serif;color:#000;transform:scaleX(0.9434);transform-origin:0 0;">195.470</span>
<span id="p3" class="t" style="left:1316.90px;top:143.71px;font:normal 9.5px/12px 'Liberation Sans', sans-serif;color:#000;transform:scaleX(0.9434);transform-origin:0 0;">194.970</span>
<span id="p4" class="t" style="left:1316.90px;top:175.71px;font:normal 9.5px/12px 'Liberation Sans', sans-serif;color:#000;transform:scaleX(0.9434);transform-origin:0 0;">194.470</span>
<span id="p5" class="t" style="left:1316.90px;top:208.71px;font:normal 9.5px/12px 'Liberation Sans', sans-serif;color:#000;transform:scaleX(0.9434);transform-origin:0 0;">193.970</span>
<span id="p6" class="t" style="left:1316.90px;top:240.71px;font:normal 9.5px/12px 'Liberation Sans', sans-serif;color:#000;transform:scaleX(0.9434);transform-origin:0 0;">193.470</span>
<span id="p7" class="t" style="left:1316.90px;top:272.71px;font:normal 9.5px/12px 'Liberation Sans', sans-serif;color:#000;transform:scaleX(0.9434);transform-origin:0 0;">192.970</span>
<span id="p8" class="t" style="left:1316.90px;top:304.71px;font:normal 9.5px/12px 'Liberation Sans', sans-serif;color:#000;transform:scaleX(0.9434);transform-origin:0 0;">192.470</span>
<div class="b" style="left:1314px;top:87px;width:39px;height:11px;background:#7a8aa2;"></div>
<span id="pcur" class="t" style="left:1316.90px;top:86.71px;font:normal 9.5px/12px 'Liberation Sans', sans-serif;color:#fff;transform:scaleX(0.9434);transform-origin:0 0;">195.863</span>
<span id="d0" class="t" style="left:3.40px;top:346.21px;font:normal 9.5px/12px 'Liberation Sans', sans-serif;color:#000;transform:scaleX(0.9920);transform-origin:0 0;">22 May 2025</span>
<span id="d1" class="t" style="left:67.50px;top:346.21px;font:normal 9.5px/12px 'Liberation Sans', sans-serif;color:#000;transform:scaleX(1.0108);transform-origin:0 0;">23 May 14:00</span>
<span id="d2" class="t" style="left:131.50px;top:346.21px;font:normal 9.5px/12px 'Liberation Sans', sans-serif;color:#000;transform:scaleX(1.0108);transform-origin:0 0;">26 May 06:00</span>
<span id="d3" class="t" style="left:195.50px;top:346.21px;font:normal 9.5px/12px 'Liberation Sans', sans-serif;color:#000;transform:scaleX(1.0108);transform-origin:0 0;">26 May 22:00</span>
<span id="d4" class="t" style="left:259.50px;top:346.21px;font:normal 9.5px/12px 'Liberation Sans', sans-serif;color:#000;transform:scaleX(1.0108);transform-origin:0 0;">27 May 14:00</span>
<span id="d5" class="t" style="left:323.50px;top:346.21px;font:normal 9.5px/12px 'Liberation Sans', sans-serif;color:#000;transform:scaleX(1.0108);transform-origin:0 0;">28 May 06:00</span>
<span id="d6" class="t" style="left:387.50px;top:346.21px;font:normal 9.5px/12px 'Liberation Sans', sans-serif;color:#000;transform:scaleX(1.0108);transform-origin:0 0;">28 May 22:00</span>
<span id="d7" class="t" style="left:451.50px;top:346.21px;font:normal 9.5px/12px 'Liberation Sans', sans-serif;color:#000;transform:scaleX(1.0108);transform-origin:0 0;">29 May 14:00</span>
<span id="d8" class="t" style="left:515.50px;top:346.21px;font:normal 9.5px/12px 'Liberation Sans', sans-serif;color:#000;transform:scaleX(1.0108);transform-origin:0 0;">30 May 06:00</span>
<span id="d9" class="t" style="left:579.50px;top:346.21px;font:normal 9.5px/12px 'Liberation Sans', sans-serif;color:#000;transform:scaleX(1.0108);transform-origin:0 0;">30 May 22:00</span>
<span id="d10" class="t" style="left:643.50px;top:346.21px;font:normal 9.5px/12px 'Liberation Sans', sans-serif;color:#000;transform:scaleX(0.9465);transform-origin:0 0;">2 Jun 14:00</span>
<span id="d11" class="t" style="left:707.50px;top:346.21px;font:normal 9.5px/12px 'Liberation Sans', sans-serif;color:#000;transform:scaleX(0.9465);transform-origin:0 0;">3 Jun 06:00</span>
<span id="d12" class="t" style="left:771.50px;top:346.21px;font:normal 9.5px/12px 'Liberation Sans', sans-serif;color:#000;transform:scaleX(0.9465);transform-origin:0 0;">3 Jun 22:00</span>
<span id="d13" class="t" style="left:835.50px;top:346.21px;font:normal 9.5px/12px 'Liberation Sans', sans-serif;color:#000;transform:scaleX(0.9465);transform-origin:0 0;">4 Jun 14:00</span>
<span id="d14" class="t" style="left:899.50px;top:346.21px;font:normal 9.5px/12px 'Liberation Sans', sans-serif;color:#000;transform:scaleX(0.9465);transform-origin:0 0;">5 Jun 06:00</span>
<span id="d15" class="t" style="left:963.50px;top:346.21px;font:normal 9.5px/12px 'Liberation Sans', sans-serif;color:#000;transform:scaleX(0.9465);transform-origin:0 0;">5 Jun 22:00</span>
<span id="d16" class="t" style="left:1027.50px;top:346.21px;font:normal 9.5px/12px 'Liberation Sans', sans-serif;color:#000;transform:scaleX(0.9465);transform-origin:0 0;">6 Jun 14:00</span>
<span id="title" class="t" style="left:51.00px;top:56.30px;font:normal 9.8px/13px 'Liberation Sans', sans-serif;color:#000;transform:scaleX(0.9498);transform-origin:0 0;">GBPJPY, H2:  Great Britain Pound vs Japanese Yen  195.975 195.983 195.851 195.863</span>
<span id="cyp" class="t" style="left:1179.60px;top:56.30px;font:normal 9.8px/13px 'Liberation Sans', sans-serif;color:#000;transform:scaleX(0.9360);transform-origin:0 0;">CYP Trade Manager Basic</span>
<span id="cap" class="t" style="left:8.90px;top:131.30px;font:normal 9.8px/13px 'Liberation Sans', sans-serif;color:#000;transform:scaleX(0.9501);transform-origin:0 0;">CYP Trade Manager Basic – Upgrade for full version</span>
<svg id="cicons" width="400" height="80"><g fill="none" stroke-width="1.2">
<rect x="9.600" y="57.600" width="7.400" height="10" rx="1" stroke="#d9443c" fill="#fde3df"/><rect x="16.400" y="57.600" width="7" height="10" rx="1" stroke="#1b6ab3" fill="#cfe8fb"/>
<path d="M11.500 60.500h4M11.500 62.500h4M11.500 64.500h4" stroke="#d9443c"/><path d="M17.500 60.500h4.500M17.500 62.500h4.500M17.500 64.500h4.500" stroke="#1b6ab3"/><path d="M10.500 68.500h3M16.500 68.500h3" stroke="#000"/>
<path d="M30.600 57.600h3v5h3.400v5h-6.400z" stroke="#d9443c" fill="#fde3df"/><path d="M44.400 57.600h-3v5h-3v5h6z" stroke="#1b6ab3" fill="#cfe8fb"/><rect x="35.500" y="57.500" width="4" height="2" stroke="#999" stroke-width="0.800"/>
</g></svg>
<svg id="gcap" width="1366" height="80"><g stroke="#2a7fc8" stroke-width="1" stroke-linejoin="round"><path d="M1296.500 62.300v3.500c1.500 2 6.700 2 8.200 0v-3.500" fill="#eaf5ff"/><path d="M1293.500 60.300L1300.600 57.200L1307.700 60.300L1300.600 63.500Z" fill="#6db3e8"/><path d="M1294.600 61v5.500" fill="none"/><circle cx="1294.600" cy="67.300" r="0.900" fill="#2a7fc8"/></g></svg>
<div class="b" style="left:8px;top:73px;width:187px;height:23px;background:#f7f7f7;"></div>
<div class="b" style="left:8px;top:73px;width:44px;height:23px;background:linear-gradient(#f6f6f6,#dedede);box-sizing:border-box;border:1px solid #cfcfcf;border-bottom:none;"></div>
<div class="b" style="left:152px;top:73px;width:43px;height:23px;background:linear-gradient(#f6f6f6,#dedede);box-sizing:border-box;border:1px solid #cfcfcf;border-bottom:none;"></div>
<div class="b" style="left:12px;top:94px;width:36px;height:1px;background:#a6a6a6;"></div>
<div class="b" style="left:155px;top:94px;width:36px;height:1px;background:#a6a6a6;"></div>
<div class="b" style="left:54px;top:73px;width:95px;height:20px;background:#fff;box-sizing:border-box;border:1px solid #a9a9a9;"></div>
<div class="b" style="left:55px;top:74px;width:18px;height:18px;background:#ececec;box-sizing:border-box;border-right:1px solid #c4c4c4;"></div>
<div class="b" style="left:130px;top:74px;width:18px;height:18px;background:#ececec;box-sizing:border-box;border-left:1px solid #c4c4c4;"></div>
<svg width="200" height="100"><path d="M60.500 81h6l-3 3.300z M136 84.300h6l-3-3.300z" fill="#111"/></svg>
<span id="sell" class="t" style="left:17.30px;top:76.14px;font:normal 12px/16px 'Liberation Sans', sans-serif;color:#111;transform:scaleX(0.7834);transform-origin:0 0;">SELL</span>
<span id="buy" class="t" style="left:161.50px;top:76.14px;font:normal 12px/16px 'Liberation Sans', sans-serif;color:#111;transform:scaleX(0.8628);transform-origin:0 0;">BUY</span>
<span id="vol" class="t" style="left:104.00px;top:76.14px;font:normal 12px/16px 'Liberation Sans', sans-serif;color:#111;transform:scaleX(0.9076);transform-origin:0 0;">0.10</span>
<div class="b" style="left:8px;top:96px;width:93px;height:34px;background:linear-gradient(#e6e6e6,#a2a2a2);"></div>
<div class="b" style="left:103px;top:96px;width:92px;height:34px;background:linear-gradient(#e6e6e6,#a2a2a2);"></div>
<span id="s195" class="t" style="left:24.60px;top:111.44px;font:bold 12px/16px 'Liberation Sans', sans-serif;color:#000;transform:scaleX(0.9984);transform-origin:0 0;">195</span>
<span id="s86" class="t" style="left:49.30px;top:91.71px;font:normal 32px/42px 'Liberation Sans', sans-serif;color:#000;transform:scaleX(0.8962);transform-origin:0 0;">86</span>
<span id="s3" class="t" style="left:85.30px;top:97.80px;font:bold 13px/17px 'Liberation Sans', sans-serif;color:#000;transform:scaleX(0.8570);transform-origin:0 0;">3</span>
<span id="b195" class="t" style="left:118.70px;top:111.44px;font:bold 12px/16px 'Liberation Sans', sans-serif;color:#000;transform:scaleX(0.9835);transform-origin:0 0;">195</span>
<span id="b96" class="t" style="left:143.50px;top:91.71px;font:normal 32px/42px 'Liberation Sans', sans-serif;color:#000;transform:scaleX(0.8962);transform-origin:0 0;">96</span>
<span id="b3" class="t" style="left:180.20px;top:97.80px;font:bold 13px/17px 'Liberation Sans', sans-serif;color:#000;transform:scaleX(0.8432);transform-origin:0 0;">3</span>
<div id="flags">
<svg style="left:772px;top:326px;z-index:3" width="9" height="17" shape-rendering="crispEdges"><rect x="1" y="1" width="6" height="11" fill="#f4f4f4"/><path d="M0.500 16V0.500H7M0.500 12.500H7" fill="none" stroke="#000"/></svg>
<span class="t" style="left:776.4px;top:326.6px;width:4.2px;overflow:hidden;font:9.5px/12px 'Liberation Sans', sans-serif;transform:scaleX(0.945);transform-origin:0 0;color:#000;z-index:3;">:</span>
<svg style="left:924px;top:326px;z-index:3" width="9" height="17" shape-rendering="crispEdges"><rect x="1" y="1" width="6" height="11" fill="#f4f4f4"/><path d="M0.500 16V0.500H7M0.500 12.500H7" fill="none" stroke="#000"/></svg>
<span class="t" style="left:930.4px;top:326.6px;width:4.2px;overflow:hidden;font:9.5px/12px 'Liberation Sans', sans-serif;transform:scaleX(0.945);transform-origin:0 0;color:#000;z-index:3;">:</span>
<svg style="left:956px;top:326px;z-index:3" width="9" height="17" shape-rendering="crispEdges"><rect x="1" y="1" width="6" height="11" fill="#f4f4f4"/><path d="M0.500 16V0.500H7M0.500 12.500H7" fill="none" stroke="#000"/></svg>
<span class="t" style="left:962.4px;top:326.6px;width:4.2px;overflow:hidden;font:9.5px/12px 'Liberation Sans', sans-serif;transform:scaleX(0.945);transform-origin:0 0;color:#000;z-index:3;">:</span>
<svg style="left:1028px;top:326px;z-index:3" width="9" height="17" shape-rendering="crispEdges"><rect x="1" y="1" width="6" height="11" fill="#f4f4f4"/><path d="M0.500 16V0.500H7M0.500 12.500H7" fill="none" stroke="#000"/></svg>
<span class="t" style="left:1034.4px;top:326.6px;width:4.2px;overflow:hidden;font:9.5px/12px 'Liberation Sans', sans-serif;transform:scaleX(0.945);transform-origin:0 0;color:#000;z-index:3;">:</span>
<svg style="left:620px;top:326px;z-index:4" width="17" height="17" shape-rendering="crispEdges"><rect x="1" y="1" width="14" height="11" fill="#afeeee"/><path d="M0.500 16V0.500H15M0.500 12.500H15" fill="none" stroke="#000"/></svg>
<span class="t" style="left:622.6px;top:326.6px;width:13.1px;overflow:hidden;font:9.5px/12px 'Liberation Sans', sans-serif;transform:scaleX(0.945);transform-origin:0 0;color:#000;z-index:4;clip-path:inset(0 0 0 2.8px);">08:</span>
<svg style="left:812px;top:326px;z-index:4" width="17" height="17" shape-rendering="crispEdges"><rect x="1" y="1" width="14" height="11" fill="#f4f4f4"/><path d="M0.500 16V0.500H15M0.500 12.500H15" fill="none" stroke="#000"/></svg>
<span class="t" style="left:814.6px;top:326.6px;width:13.1px;overflow:hidden;font:9.5px/12px 'Liberation Sans', sans-serif;transform:scaleX(0.945);transform-origin:0 0;color:#000;z-index:4;clip-path:inset(0 0 0 2.8px);">08:</span>
<svg style="left:588px;top:326px;z-index:5" width="9" height="17" shape-rendering="crispEdges"><rect x="1" y="1" width="6" height="11" fill="#afeeee"/><path d="M0.500 16V0.500H7M0.500 12.500H7" fill="none" stroke="#000"/></svg>
<span class="t" style="left:590.6px;top:326.6px;width:6.0px;overflow:hidden;font:9.5px/12px 'Liberation Sans', sans-serif;transform:scaleX(0.945);transform-origin:0 0;color:#000;z-index:5;">0</span>
<svg style="left:636px;top:326px;z-index:5" width="9" height="17" shape-rendering="crispEdges"><rect x="1" y="1" width="6" height="11" fill="#afeeee"/><path d="M0.500 16V0.500H7M0.500 12.500H7" fill="none" stroke="#000"/></svg>
<span class="t" style="left:638.6px;top:326.6px;width:6.0px;overflow:hidden;font:9.5px/12px 'Liberation Sans', sans-serif;transform:scaleX(0.945);transform-origin:0 0;color:#000;z-index:5;">1</span>
<svg style="left:644px;top:326px;z-index:5" width="9" height="17" shape-rendering="crispEdges"><rect x="1" y="1" width="6" height="11" fill="#f4f4f4"/><path d="M0.500 16V0.500H7M0.500 12.500H7" fill="none" stroke="#000"/></svg>
<span class="t" style="left:646.6px;top:326.6px;width:6.0px;overflow:hidden;font:9.5px/12px 'Liberation Sans', sans-serif;transform:scaleX(0.945);transform-origin:0 0;color:#000;z-index:5;">1</span>
<svg style="left:652px;top:326px;z-index:5" width="17" height="17" shape-rendering="crispEdges"><rect x="1" y="1" width="14" height="11" fill="#f4f4f4"/><path d="M0.500 16V0.500H15M0.500 12.500H15" fill="none" stroke="#000"/></svg>
<span class="t" style="left:654.6px;top:326.6px;width:13.1px;overflow:hidden;font:9.5px/12px 'Liberation Sans', sans-serif;transform:scaleX(0.945);transform-origin:0 0;color:#000;z-index:5;">17:</span>
<svg style="left:668px;top:326px;z-index:5" width="9" height="17" shape-rendering="crispEdges"><rect x="1" y="1" width="6" height="11" fill="#f4f4f4"/><path d="M0.500 16V0.500H7M0.500 12.500H7" fill="none" stroke="#000"/></svg>
<span class="t" style="left:670.6px;top:326.6px;width:6.0px;overflow:hidden;font:9.5px/12px 'Liberation Sans', sans-serif;transform:scaleX(0.945);transform-origin:0 0;color:#000;z-index:5;">2</span>
<svg style="left:676px;top:326px;z-index:5" width="17" height="17" shape-rendering="crispEdges"><rect x="1" y="1" width="14" height="11" fill="#afeeee"/><path d="M0.500 16V0.500H15M0.500 12.500H15" fill="none" stroke="#000"/></svg>
<span class="t" style="left:678.6px;top:326.6px;width:13.1px;overflow:hidden;font:9.5px/12px 'Liberation Sans', sans-serif;transform:scaleX(0.945);transform-origin:0 0;color:#000;z-index:5;">23:</span>
<svg style="left:692px;top:326px;z-index:5" width="17" height="17" shape-rendering="crispEdges"><rect x="1" y="1" width="14" height="11" fill="#afeeee"/><path d="M0.500 16V0.500H15M0.500 12.500H15" fill="none" stroke="#000"/></svg>
<span class="t" style="left:694.6px;top:326.6px;width:13.1px;overflow:hidden;font:9.5px/12px 'Liberation Sans', sans-serif;transform:scaleX(0.945);transform-origin:0 0;color:#000;z-index:5;">02:</span>
<svg style="left:708px;top:326px;z-index:5" width="32" height="17" shape-rendering="crispEdges"><path d="M0.500 16V0.500H26L29 6.500L26 12.500H0.500" fill="#f4f4f4" stroke="#000" shape-rendering="auto"/><path d="M0.500 0V16" stroke="#000"/></svg>
<span class="t" style="left:710.6px;top:326.6px;width:28.6px;overflow:hidden;font:9.5px/12px 'Liberation Sans', sans-serif;transform:scaleX(0.945);transform-origin:0 0;color:#000;z-index:5;">06:35</span>
<svg style="left:740px;top:326px;z-index:5" width="9" height="17" shape-rendering="crispEdges"><rect x="1" y="1" width="6" height="11" fill="#afeeee"/><path d="M0.500 16V0.500H7M0.500 12.500H7" fill="none" stroke="#000"/></svg>
<span class="t" style="left:742.6px;top:326.6px;width:6.0px;overflow:hidden;font:9.5px/12px 'Liberation Sans', sans-serif;transform:scaleX(0.945);transform-origin:0 0;color:#000;z-index:5;">1</span>
<svg style="left:780px;top:326px;z-index:5" width="9" height="17" shape-rendering="crispEdges"><rect x="1" y="1" width="6" height="11" fill="#f4f4f4"/><path d="M0.500 16V0.500H7M0.500 12.500H7" fill="none" stroke="#000"/></svg>
<span class="t" style="left:782.6px;top:326.6px;width:6.0px;overflow:hidden;font:9.5px/12px 'Liberation Sans', sans-serif;transform:scaleX(0.945);transform-origin:0 0;color:#000;z-index:5;">0</span>
<svg style="left:828px;top:326px;z-index:5" width="9" height="17" shape-rendering="crispEdges"><rect x="1" y="1" width="6" height="11" fill="#afeeee"/><path d="M0.500 16V0.500H7M0.500 12.500H7" fill="none" stroke="#000"/></svg>
<span class="t" style="left:830.6px;top:326.6px;width:6.0px;overflow:hidden;font:9.5px/12px 'Liberation Sans', sans-serif;transform:scaleX(0.945);transform-origin:0 0;color:#000;z-index:5;">1</span>
<svg style="left:836px;top:326px;z-index:5" width="17" height="17" shape-rendering="crispEdges"><rect x="1" y="1" width="14" height="11" fill="#f4f4f4"/><path d="M0.500 16V0.500H15M0.500 12.500H15" fill="none" stroke="#000"/></svg>
<span class="t" style="left:838.6px;top:326.6px;width:13.1px;overflow:hidden;font:9.5px/12px 'Liberation Sans', sans-serif;transform:scaleX(0.945);transform-origin:0 0;color:#000;z-index:5;">14:</span>
<svg style="left:852px;top:326px;z-index:5" width="17" height="17" shape-rendering="crispEdges"><rect x="1" y="1" width="14" height="11" fill="#f4f4f4"/><path d="M0.500 16V0.500H15M0.500 12.500H15" fill="none" stroke="#000"/></svg>
<span class="t" style="left:854.6px;top:326.6px;width:13.1px;overflow:hidden;font:9.5px/12px 'Liberation Sans', sans-serif;transform:scaleX(0.945);transform-origin:0 0;color:#000;z-index:5;">18:</span>
<svg style="left:868px;top:326px;z-index:5" width="17" height="17" shape-rendering="crispEdges"><rect x="1" y="1" width="14" height="11" fill="#f4f4f4"/><path d="M0.500 16V0.500H15M0.500 12.500H15" fill="none" stroke="#000"/></svg>
<span class="t" style="left:870.6px;top:326.6px;width:13.1px;overflow:hidden;font:9.5px/12px 'Liberation Sans', sans-serif;transform:scaleX(0.945);transform-origin:0 0;color:#000;z-index:5;">23:</span>
<svg style="left:884px;top:326px;z-index:5" width="17" height="17" shape-rendering="crispEdges"><rect x="1" y="1" width="14" height="11" fill="#f4f4f4"/><path d="M0.500 16V0.500H15M0.500 12.500H15" fill="none" stroke="#000"/></svg>
<span class="t" style="left:886.6px;top:326.6px;width:13.1px;overflow:hidden;font:9.5px/12px 'Liberation Sans', sans-serif;transform:scaleX(0.945);transform-origin:0 0;color:#000;z-index:5;">02:</span>
<svg style="left:964px;top:326px;z-index:5" width="17" height="17" shape-rendering="crispEdges"><rect x="1" y="1" width="14" height="11" fill="#f4f4f4"/><path d="M0.500 16V0.500H15M0.500 12.500H15" fill="none" stroke="#000"/></svg>
<span class="t" style="left:966.6px;top:326.6px;width:13.1px;overflow:hidden;font:9.5px/12px 'Liberation Sans', sans-serif;transform:scaleX(0.945);transform-origin:0 0;color:#000;z-index:5;">23:</span>
<svg style="left:980px;top:326px;z-index:5" width="26" height="17" shape-rendering="crispEdges"><rect x="1" y="1" width="23" height="11" fill="#f4f4f4"/><path d="M0.500 16V0.500H24M0.500 12.500H24" fill="none" stroke="#000"/></svg>
<span class="t" style="left:982.6px;top:326.6px;width:22.6px;overflow:hidden;font:9.5px/12px 'Liberation Sans', sans-serif;transform:scaleX(0.945);transform-origin:0 0;color:#000;z-index:5;">02:50</span>
<svg style="left:1036px;top:326px;z-index:5" width="9" height="17" shape-rendering="crispEdges"><rect x="1" y="1" width="6" height="11" fill="#f4f4f4"/><path d="M0.500 16V0.500H7M0.500 12.500H7" fill="none" stroke="#000"/></svg>
<span class="t" style="left:1038.6px;top:326.6px;width:6.0px;overflow:hidden;font:9.5px/12px 'Liberation Sans', sans-serif;transform:scaleX(0.945);transform-origin:0 0;color:#000;z-index:5;">1</span>
<svg style="left:1044px;top:326px;z-index:5" width="17" height="17" shape-rendering="crispEdges"><rect x="1" y="1" width="14" height="11" fill="#f4f4f4"/><path d="M0.500 16V0.500H15M0.500 12.500H15" fill="none" stroke="#000"/></svg>
<span class="t" style="left:1046.6px;top:326.6px;width:13.1px;overflow:hidden;font:9.5px/12px 'Liberation Sans', sans-serif;transform:scaleX(0.945);transform-origin:0 0;color:#000;z-index:5;">19:</span>
<svg style="left:1060px;top:326px;z-index:5" width="31" height="17" shape-rendering="crispEdges"><path d="M0.500 16V0.500H25L28 6.500L25 12.500H0.500" fill="#f4f4f4" stroke="#000" shape-rendering="auto"/><path d="M0.500 0V16" stroke="#000"/></svg>
<span class="t" style="left:1062.6px;top:326.6px;width:27.5px;overflow:hidden;font:9.5px/12px 'Liberation Sans', sans-serif;transform:scaleX(0.945);transform-origin:0 0;color:#000;z-index:5;">22:30</span>
<svg style="left:1259px;top:326px;z-index:5" width="31" height="17" shape-rendering="crispEdges"><path d="M0.500 16V0.500H25L28 6.500L25 12.500H0.500" fill="#f4f4f4" stroke="#000" shape-rendering="auto"/><path d="M0.500 0V16" stroke="#000"/></svg>
<span class="t" style="left:1261.6px;top:326.6px;width:27.5px;overflow:hidden;font:9.5px/12px 'Liberation Sans', sans-serif;transform:scaleX(0.945);transform-origin:0 0;color:#000;z-index:5;">23:50</span>
<svg style="left:596px;top:326px;z-index:9" width="30" height="17" shape-rendering="crispEdges"><path d="M0.500 16V0.500H24L27 6.500L24 12.500H0.500" fill="#afeeee" stroke="#000" shape-rendering="auto"/><path d="M0.500 0V16" stroke="#000"/></svg>
<span class="t" style="left:598.6px;top:326.6px;width:26.5px;overflow:hidden;font:9.5px/12px 'Liberation Sans', sans-serif;transform:scaleX(0.945);transform-origin:0 0;color:#000;z-index:9;">03:30</span>
<svg style="left:748px;top:326px;z-index:9" width="31" height="17" shape-rendering="crispEdges"><path d="M0.500 16V0.500H25L28 6.500L25 12.500H0.500" fill="#f4f4f4" stroke="#000" shape-rendering="auto"/><path d="M0.500 0V16" stroke="#000"/></svg>
<span class="t" style="left:750.6px;top:326.6px;width:27.5px;overflow:hidden;font:9.5px/12px 'Liberation Sans', sans-serif;transform:scaleX(0.945);transform-origin:0 0;color:#000;z-index:9;">17:00</span>
<svg style="left:788px;top:326px;z-index:9" width="30" height="17" shape-rendering="crispEdges"><path d="M0.500 16V0.500H24L27 6.500L24 12.500H0.500" fill="#f4f4f4" stroke="#000" shape-rendering="auto"/><path d="M0.500 0V16" stroke="#000"/></svg>
<span class="t" style="left:790.6px;top:326.6px;width:26.5px;overflow:hidden;font:9.5px/12px 'Liberation Sans', sans-serif;transform:scaleX(0.945);transform-origin:0 0;color:#000;z-index:9;">03:30</span>
<svg style="left:900px;top:326px;z-index:9" width="33" height="17" shape-rendering="crispEdges"><path d="M0.500 16V0.500H27L30 6.500L27 12.500H0.500" fill="#f4f4f4" stroke="#000" shape-rendering="auto"/><path d="M0.500 0V16" stroke="#000"/></svg>
<span class="t" style="left:902.6px;top:326.6px;width:29.6px;overflow:hidden;font:9.5px/12px 'Liberation Sans', sans-serif;transform:scaleX(0.945);transform-origin:0 0;color:#000;z-index:9;">06:35</span>
<svg style="left:932px;top:326px;z-index:9" width="33" height="17" shape-rendering="crispEdges"><path d="M0.500 16V0.500H27L30 6.500L27 12.500H0.500" fill="#f4f4f4" stroke="#000" shape-rendering="auto"/><path d="M0.500 0V16" stroke="#000"/></svg>
<span class="t" style="left:934.6px;top:326.6px;width:29.6px;overflow:hidden;font:9.5px/12px 'Liberation Sans', sans-serif;transform:scaleX(0.945);transform-origin:0 0;color:#000;z-index:9;">15:30</span>
<svg style="left:1004px;top:326px;z-index:9" width="33" height="17" shape-rendering="crispEdges"><path d="M0.500 16V0.500H27L30 6.500L27 12.500H0.500" fill="#f4f4f4" stroke="#000" shape-rendering="auto"/><path d="M0.500 0V16" stroke="#000"/></svg>
<span class="t" style="left:1006.6px;top:326.6px;width:29.6px;overflow:hidden;font:9.5px/12px 'Liberation Sans', sans-serif;transform:scaleX(0.945);transform-origin:0 0;color:#000;z-index:9;">08:00</span>
</div>
<svg width="1366" height="350" shape-rendering="crispEdges">
<rect x="612" y="340" width="1" height="2" fill="#000"/>
<rect x="628" y="340" width="1" height="2" fill="#000"/>
<rect x="660" y="340" width="1" height="2" fill="#000"/>
<rect x="684" y="340" width="1" height="2" fill="#000"/>
<rect x="700" y="340" width="1" height="2" fill="#000"/>
<rect x="764" y="340" width="1" height="2" fill="#000"/>
<rect x="796" y="340" width="1" height="2" fill="#000"/>
<rect x="804" y="340" width="1" height="2" fill="#000"/>
<rect x="820" y="340" width="1" height="2" fill="#000"/>
<rect x="844" y="340" width="1" height="2" fill="#000"/>
<rect x="860" y="340" width="1" height="2" fill="#000"/>
<rect x="876" y="340" width="1" height="2" fill="#000"/>
<rect x="892" y="340" width="1" height="2" fill="#000"/>
<rect x="908" y="340" width="1" height="2" fill="#000"/>
<rect x="916" y="340" width="1" height="2" fill="#000"/>
<rect x="940" y="340" width="1" height="2" fill="#000"/>
<rect x="948" y="340" width="1" height="2" fill="#000"/>
<rect x="972" y="340" width="1" height="2" fill="#000"/>
<rect x="988" y="340" width="1" height="2" fill="#000"/>
<rect x="996" y="340" width="1" height="2" fill="#000"/>
<rect x="1012" y="340" width="1" height="2" fill="#000"/>
<rect x="1020" y="340" width="1" height="2" fill="#000"/>
<rect x="1052" y="340" width="1" height="2" fill="#000"/>
</svg>
<div class="b" style="left:15px;top:368px;width:1348px;height:284px;background:#ffffff;"></div>
<div class="b" style="left:15px;top:368px;width:1348px;height:1px;background:#acacac;"></div>
<div class="b" style="left:15px;top:368px;width:1px;height:284px;background:#8c8c8c;"></div>
<div class="b" style="left:1362px;top:369px;width:1px;height:283px;background:#e6e6e6;"></div>
<div class="b" style="left:15px;top:651px;width:1348px;height:1px;background:#111;"></div>
<div class="b" style="left:16px;top:412px;width:1346px;height:1px;background:#d0d0d0;"></div>
<div class="b" style="left:175px;top:370px;width:1px;height:42px;background:#e2e2e2;"></div>
<div class="b" style="left:355px;top:370px;width:1px;height:42px;background:#e2e2e2;"></div>
<div class="b" style="left:1361px;top:370px;width:1px;height:22px;background:#e8e8e8;"></div>
<span id="hTime" class="t" style="left:22.80px;top:372.84px;font:normal 12px/16px 'Liberation Sans', sans-serif;color:#222;transform:scaleX(0.9606);transform-origin:0 0;">Time</span>
<span id="hSrc" class="t" style="left:182.20px;top:372.84px;font:normal 12px/16px 'Liberation Sans', sans-serif;color:#222;transform:scaleX(0.9361);transform-origin:0 0;">Source</span>
<span id="hMsg" class="t" style="left:362.30px;top:372.84px;font:normal 12px/16px 'Liberation Sans', sans-serif;color:#222;transform:scaleX(0.9342);transform-origin:0 0;">Message</span>
<div class="b" style="left:23.5px;top:401.5px;width:3px;height:3px;background:#b8b8b8;border-radius:1.5px;"></div>
<span id="rTime" class="t" style="left:37.00px;top:394.54px;font:normal 12px/16px 'Liberation Sans', sans-serif;color:#111;transform:scaleX(0.8968);transform-origin:0 0;">2025.06.07 10:21:44.449</span>
<span id="rSrc" class="t" style="left:179.70px;top:394.54px;font:normal 12px/16px 'Liberation Sans', sans-serif;color:#111;transform:scaleX(0.9329);transform-origin:0 0;">CYP Trade Manager Basic (GBP...</span>
<span id="rMsg" class="t" style="left:360.00px;top:396.13px;font:normal 12.6px/16px 'Liberation Mono', monospace;color:#2a2a2a;transform:scaleX(0.9248);transform-origin:0 0;">&gt;&gt;&gt; 2025.06.06 23:58:59 [INFO] EA initialized successfully – Maximum trades to manage: 2 &lt;&lt;&lt;</span>
<div class="b" style="left:1px;top:382px;width:13px;height:293px;background:linear-gradient(#b8d0ea,#9db7d9);"></div>
<svg width="20" height="380"><path d="M4 371l5.500 5.500M9.500 371l-5.500 5.500" stroke="#111" stroke-width="1.700" fill="none"/></svg>
<span id="tbx" class="t" style="left:1px;top:671.6px;height:14px;font:bold 12px/14px 'Liberation Sans', sans-serif;color:#222;transform:rotate(-90deg) scaleX(0.82);transform-origin:0 0;">Toolbox</span>
<span id="tab0" class="t" style="left:28.60px;top:652.84px;font:normal 12px/16px 'Liberation Sans', sans-serif;color:#6e6e6e;transform:scaleX(0.8866);transform-origin:0 0;">Trade</span>
<span id="tab1" class="t" style="left:77.00px;top:652.84px;font:normal 12px/16px 'Liberation Sans', sans-serif;color:#6e6e6e;transform:scaleX(0.9565);transform-origin:0 0;">Exposure</span>
<span id="tab2" class="t" style="left:145.00px;top:652.84px;font:normal 12px/16px 'Liberation Sans', sans-serif;color:#6e6e6e;transform:scaleX(1.0176);transform-origin:0 0;">History</span>
<span id="tab3" class="t" style="left:203.00px;top:652.84px;font:normal 12px/16px 'Liberation Sans', sans-serif;color:#6e6e6e;transform:scaleX(0.9662);transform-origin:0 0;">News</span>
<span id="tab4" class="t" style="left:252.00px;top:652.84px;font:normal 12px/16px 'Liberation Sans', sans-serif;color:#6e6e6e;transform:scaleX(1.0155);transform-origin:0 0;">Mailbox</span>
<span id="tab5" class="t" style="left:327.00px;top:652.84px;font:normal 12px/16px 'Liberation Sans', sans-serif;color:#6e6e6e;transform:scaleX(0.9650);transform-origin:0 0;">Calendar</span>
<span id="tab6" class="t" style="left:394.00px;top:652.84px;font:normal 12px/16px 'Liberation Sans', sans-serif;color:#6e6e6e;transform:scaleX(1.0125);transform-origin:0 0;">Company</span>
<span id="tab7" class="t" style="left:466.00px;top:652.84px;font:normal 12px/16px 'Liberation Sans', sans-serif;color:#6e6e6e;transform:scaleX(1.0102);transform-origin:0 0;">Alerts</span>
<span id="tab8" class="t" style="left:516.00px;top:652.84px;font:normal 12px/16px 'Liberation Sans', sans-serif;color:#6e6e6e;transform:scaleX(0.9913);transform-origin:0 0;">Articles</span>
<span id="tab9" class="t" style="left:575.00px;top:652.84px;font:normal 12px/16px 'Liberation Sans', sans-serif;color:#6e6e6e;transform:scaleX(0.9263);transform-origin:0 0;">Code Base</span>
<div class="b" style="left:67px;top:655px;width:1px;height:15px;background:#555;"></div>
<div class="b" style="left:135px;top:655px;width:1px;height:15px;background:#555;"></div>
<div class="b" style="left:193px;top:655px;width:1px;height:15px;background:#555;"></div>
<div class="b" style="left:242px;top:655px;width:1px;height:15px;background:#555;"></div>
<div class="b" style="left:317px;top:655px;width:1px;height:15px;background:#555;"></div>
<div class="b" style="left:384px;top:655px;width:1px;height:15px;background:#555;"></div>
<div class="b" style="left:456px;top:655px;width:1px;height:15px;background:#555;"></div>
<div class="b" style="left:506px;top:655px;width:1px;height:15px;background:#555;"></div>
<div class="b" style="left:565px;top:655px;width:1px;height:15px;background:#555;"></div>
<span id="mb11" class="t" style="left:296.50px;top:659.21px;font:bold 9.5px/12px 'Liberation Sans', sans-serif;color:#e01010;transform:scaleX(0.9456);transform-origin:0 0;">11</span>
<div class="b" style="left:640px;top:651px;width:58px;height:20px;background:#fff;box-sizing:border-box;border:1px solid #111;border-top:none;"></div>
<span id="tabE" class="t" style="left:650.00px;top:652.84px;font:normal 12px/16px 'Liberation Sans', sans-serif;color:#000;transform:scaleX(0.9339);transform-origin:0 0;">Experts</span>
<span id="tabJ" class="t" style="left:707.60px;top:652.84px;font:normal 12px/16px 'Liberation Sans', sans-serif;color:#6e6e6e;transform:scaleX(0.9756);transform-origin:0 0;">Journal</span>
<span id="mkt" class="t" style="left:1133.50px;top:655.84px;font:normal 12px/16px 'Liberation Sans', sans-serif;color:#111;transform:scaleX(0.9949);transform-origin:0 0;">Market</span>
<span id="sig" class="t" style="left:1202.00px;top:655.84px;font:normal 12px/16px 'Liberation Sans', sans-serif;color:#9a9a9a;transform:scaleX(0.9401);transform-origin:0 0;">Signals</span>
<span id="vps" class="t" style="left:1271.00px;top:655.84px;font:normal 12px/16px 'Liberation Sans', sans-serif;color:#111;transform:scaleX(0.8328);transform-origin:0 0;">VPS</span>
<span id="tst" class="t" style="left:1323.40px;top:655.84px;font:normal 12px/16px 'Liberation Sans', sans-serif;color:#111;transform:scaleX(0.9208);transform-origin:0 0;">Tester</span>
<svg width="1366" height="699"><g fill="none" stroke-width="1.200">
<path d="M1118.500 660v-1.500a3 3 0 0 1 6 0v1.500" stroke="#c98a00"/><path d="M1116.500 660.500h10l0.800 9h-11.600z" fill="#ffc916" stroke="#d89c00" stroke-width="1"/>
<g stroke="#b0b0b0"><circle cx="1190.300" cy="663.500" r="1" fill="#b0b0b0"/><path d="M1187.500 661a3.600 3.600 0 0 0 0 5M1193 661a3.600 3.600 0 0 1 0 5M1185 659a6.500 6.500 0 0 0 0 9M1195.500 659a6.500 6.500 0 0 1 0 9"/></g>
<g stroke="#1b6ab3"><path d="M1254.500 666.500a3.300 3.300 0 0 1 0.500-6.500a4.500 4.500 0 0 1 8.600-0.500a3.500 3.500 0 0 1 0.400 7z" fill="#d9edfd"/><path d="M1259 666.500v3M1253.500 669.500h11"/><circle cx="1259" cy="669.500" r="1.200" fill="#fff"/></g>
<g stroke="#1b6ab3"><rect x="1306" y="657.500" width="11" height="11" rx="2" fill="#d9edfd"/><path d="M1308.500 655.500v2M1311.500 655.500v2M1314.500 655.500v2M1308.500 668.500v2M1311.500 668.500v2M1314.500 668.500v2M1304 660.500h2M1304 663.500h2M1304 666.500h2M1317 660.500h2M1317 663.500h2M1317 666.500h2" stroke-width="1"/></g>
</g></svg>
<div class="b" style="left:0px;top:676px;width:1366px;height:1px;background:#c4c4c4;"></div>
<div class="b" style="left:0px;top:677px;width:1366px;height:1px;background:#fafafa;"></div>
<span id="help" class="t" style="left:2.50px;top:682.84px;font:normal 12px/16px 'Liberation Sans', sans-serif;color:#111;transform:scaleX(0.9308);transform-origin:0 0;">For Help, press F1</span>
<span id="def" class="t" style="left:679.50px;top:682.84px;font:normal 12px/16px 'Liberation Sans', sans-serif;color:#111;transform:scaleX(1.0123);transform-origin:0 0;">Default</span>
<div class="b" style="left:673px;top:681px;width:1px;height:18px;background:#9a9a9a;"></div>
<div class="b" style="left:801px;top:681px;width:1px;height:18px;background:#9a9a9a;"></div>
<div class="b" style="left:899px;top:681px;width:1px;height:18px;background:#9a9a9a;"></div>
<div class="b" style="left:970px;top:681px;width:1px;height:18px;background:#9a9a9a;"></div>
<div class="b" style="left:1041px;top:681px;width:1px;height:18px;background:#9a9a9a;"></div>
<div class="b" style="left:1109px;top:681px;width:1px;height:18px;background:#9a9a9a;"></div>
<div class="b" style="left:1180px;top:681px;width:1px;height:18px;background:#9a9a9a;"></div>
<div class="b" style="left:1245px;top:681px;width:1px;height:18px;background:#9a9a9a;"></div>
<span id="kb" class="t" style="left:1271.00px;top:682.84px;font:normal 12px/16px 'Liberation Sans', sans-serif;color:#111;transform:scaleX(0.9574);transform-origin:0 0;">38 / 2 Kb</span>
<svg width="1366" height="699" shape-rendering="crispEdges"><rect x="1251" y="692" width="2" height="3" fill="#1ea01e"/><rect x="1254" y="690" width="2" height="5" fill="#1ea01e"/><rect x="1257" y="688" width="2" height="7" fill="#d0d0d0"/><rect x="1260" y="686" width="2" height="9" fill="#d0d0d0"/><rect x="1263" y="684" width="2" height="11" fill="#d0d0d0"/></svg>
</body></html>
